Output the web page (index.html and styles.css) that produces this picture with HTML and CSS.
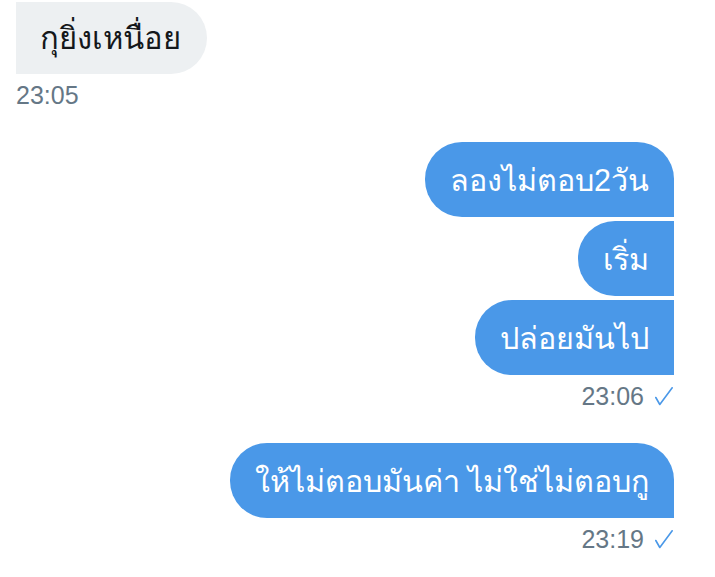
FILE: index.html
```html
<!DOCTYPE html>
<html lang="th">
<head>
<meta charset="utf-8">
<link rel="stylesheet" href="styles.css">
</head>
<body>
<div class="chat">
  <div class="group in">
    <div class="bubble in">กุยิ่งเหนื่อย</div>
    <div class="time">23:05</div>
  </div>
  <div class="group out">
    <div class="bubble out first">ลองไม่ตอบ2วัน</div>
    <div class="bubble out">เริ่ม</div>
    <div class="bubble out">ปล่อยมันไป</div>
    <div class="time">23:06<svg class="check" width="18" height="19" viewBox="0 0 18 19"><polyline points="0.8,10.5 4.8,17.5 17.2,0.8" fill="none" stroke="#4a98e8" stroke-width="1.6" stroke-linecap="round" stroke-linejoin="round"/></svg></div>
  </div>
  <div class="group out">
    <div class="bubble out first">ให้ไม่ตอบมันค่า ไม่ใช่ไม่ตอบกู</div>
    <div class="time">23:19<svg class="check" width="18" height="19" viewBox="0 0 18 19"><polyline points="0.8,10.5 4.8,17.5 17.2,0.8" fill="none" stroke="#4a98e8" stroke-width="1.6" stroke-linecap="round" stroke-linejoin="round"/></svg></div>
  </div>
</div>
</body>
</html>
```

FILE: styles.css
```css
html, body {
  margin: 0;
  padding: 0;
  background: #ffffff;
}

.chat {
  display: flex;
  flex-direction: column;
  padding: 2px 41px 0 16px;
  font-family: "Liberation Sans", "Noto Sans", sans-serif;
}

.group {
  display: flex;
  flex-direction: column;
  gap: 4px;
}

.group.in {
  align-items: flex-start;
}

.group.out {
  align-items: flex-end;
  margin-top: 32px;
}

.bubble {
  box-sizing: border-box;
  height: 75px;
  display: flex;
  align-items: center;
  padding: 0 25px;
  font-size: 30.5px;
  white-space: nowrap;
}

.bubble.in {
  height: 72px;
  padding: 0 26px 0 24px;
  font-size: 31px;
  background: #edf0f2;
  color: #14171a;
  border-radius: 0 36px 36px 0;
}

.bubble.out {
  background: #4a98e8;
  color: #ffffff;
  border-radius: 37px 0 0 37px;
}

.bubble.out.first {
  border-radius: 37px 37px 0 37px;
}

.time {
  display: flex;
  align-items: center;
  margin-top: 2px;
  font-size: 25px;
  line-height: 30px;
  color: #657786;
}

.check {
  margin-left: 11px;
  margin-right: 1px;
}
```
